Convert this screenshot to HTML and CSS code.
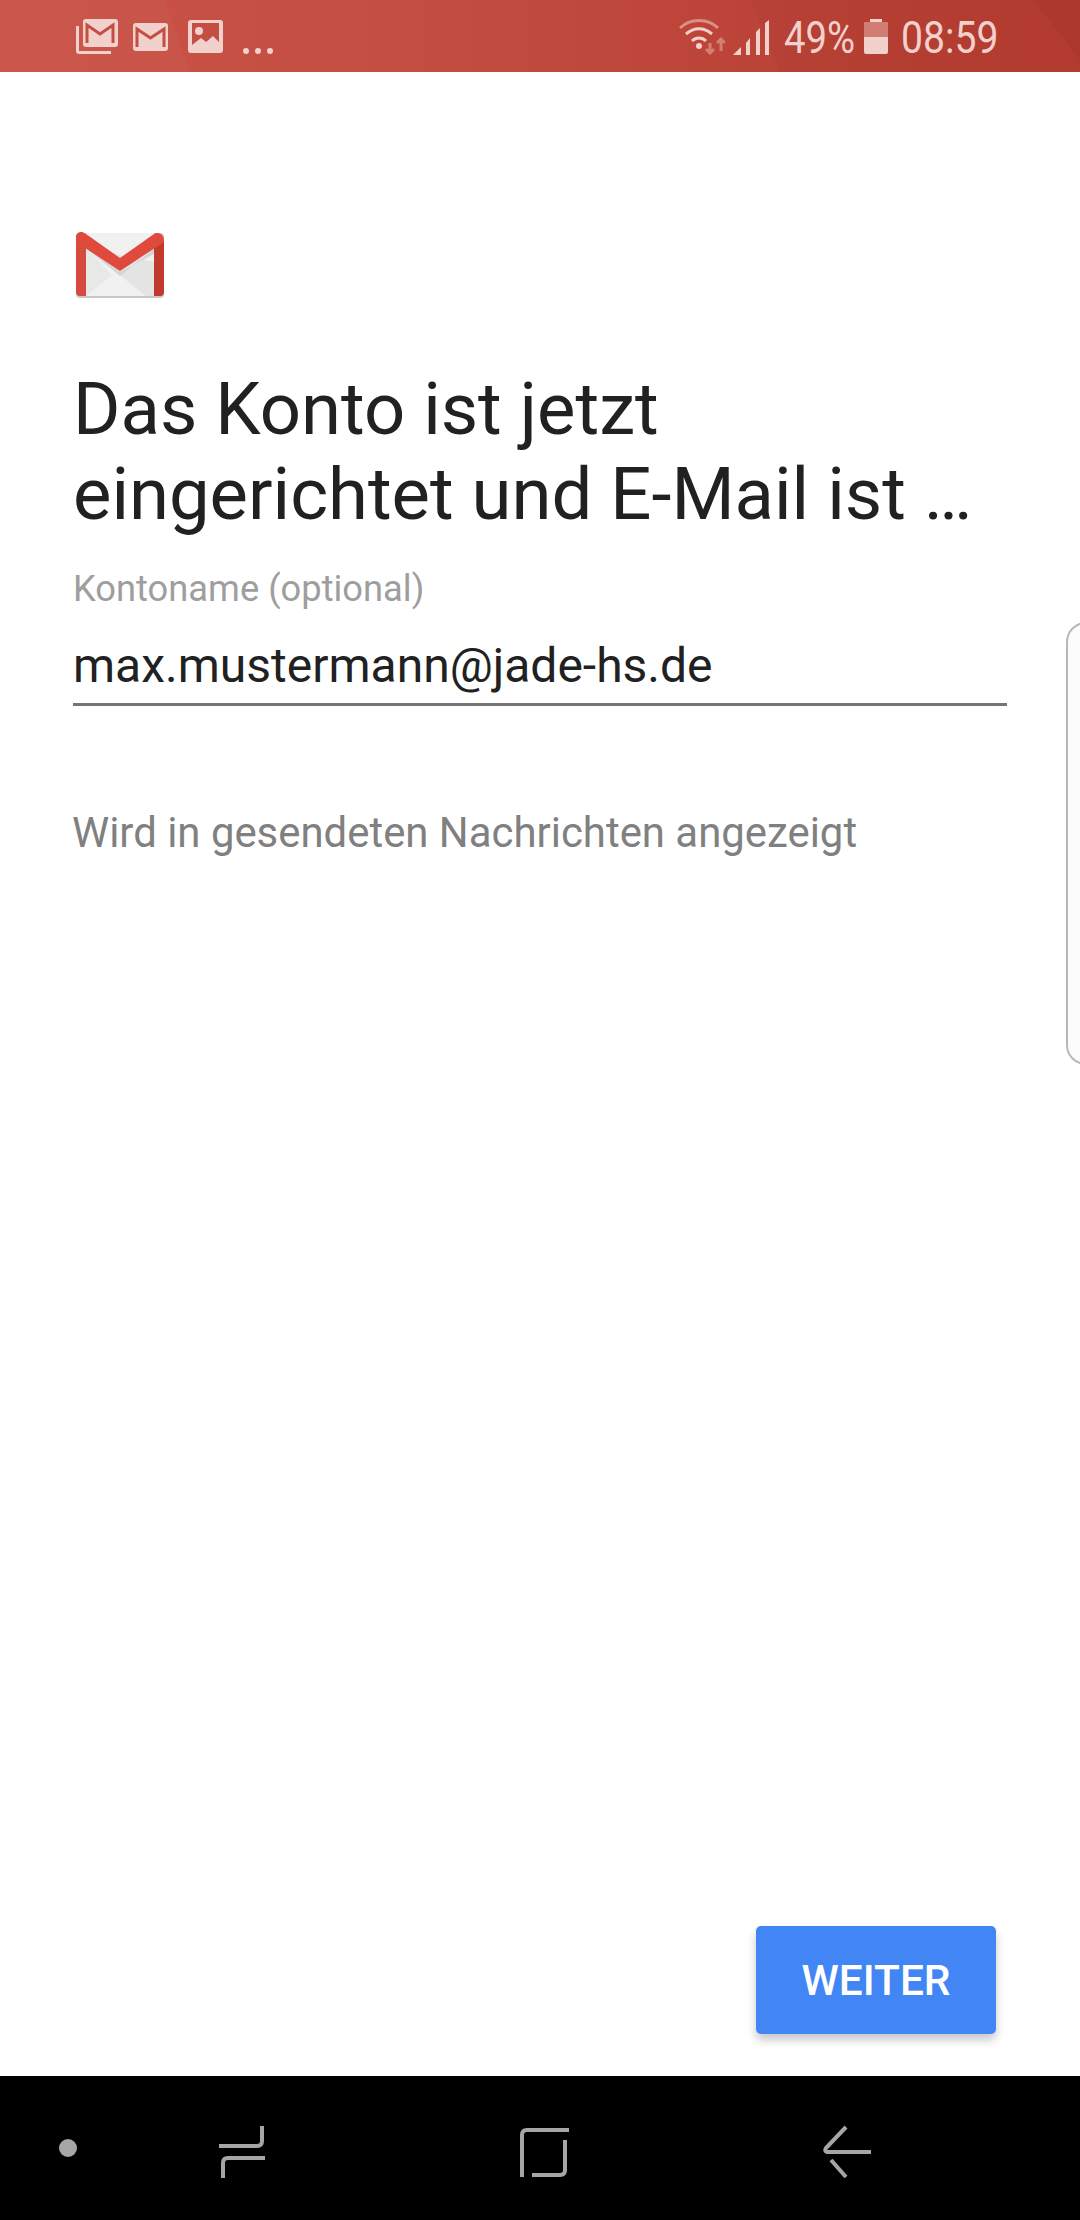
FILE: index.html
```html
<!DOCTYPE html>
<html>
<head>
  <title>Gmail</title>
  <link rel="stylesheet" href="styles.css">
</head>
<body>
  <div class="screen">
    <div class="status-bar">
      <svg class="status-bg" width="1080" height="72" viewBox="0 0 1080 72">
        <polygon points="0,0 164,0 190,72 0,72" fill="#fff" fill-opacity="0.03"/>
        <polygon points="750,0 1033,0 1080,60 1080,72 780,72" fill="#000" fill-opacity="0.02"/>
        <polygon points="1033,0 1080,0 1080,60" fill="#000" fill-opacity="0.05"/>
      </svg>
      <div class="status-left">
        <svg class="icon-stack" width="42" height="35" viewBox="0 0 42 35">
          <path d="M0 7h3v25h32v3H3a3 3 0 0 1-3-3z" fill="#f2d0cc"/>
          <rect x="7" y="0" width="35" height="28" rx="3" fill="#f2d0cc"/>
          <path d="M11 24V6l13 9 13-9v18" fill="none" stroke="#c54e43" stroke-width="3"/>
        </svg>
        <svg class="icon-mail" width="35" height="28" viewBox="0 0 35 28">
          <rect width="35" height="28" rx="3" fill="#f2d0cc"/>
          <path d="M4 24V6l13.500 9L31 6v18" fill="none" stroke="#c54e43" stroke-width="3"/>
        </svg>
        <svg class="icon-image" width="35" height="33" viewBox="0 0 35 33">
          <rect width="35" height="33" rx="3" fill="#f2d0cc"/>
          <path d="M4 3h27v19l-6-6-7 6-5-4-9 7z" fill="#c54e43"/>
          <circle cx="11" cy="11" r="4" fill="#f2d0cc"/>
        </svg>
        <div class="dots"><span></span><span></span><span></span></div>
      </div>
      <div class="status-right">
        <svg class="icon-wifi" width="46" height="36" viewBox="0 0 46 36">
          <path d="M1 9C11-1 29-1 39 9" fill="none" stroke="#dc8f86" stroke-width="3"/>
          <path d="M7 15c8-7 18-7 26 0M13 22c4-4 10-4 14 0" fill="none" stroke="#f2d0cc" stroke-width="3"/>
          <circle cx="20" cy="27" r="3" fill="#f2d0cc"/>
          <path d="M31 24v10m-4-4l4 4 4-4M42 32V20m-4 4l4-4 4 4" fill="none" stroke="#d47f75" stroke-width="3"/>
        </svg>
        <svg class="icon-signal" width="36" height="35" viewBox="0 0 36 35">
          <path d="M0 35l8-8v8zM13 35V23l4-5v17zM23 35V12l4-4v27zM32 35V3l4-3v35z" fill="#f2d0cc"/>
        </svg>
        <span class="status-text pct">49%</span>
        <div class="battery"><div class="battery-fill"></div></div>
        <span class="status-text clock">08:59</span>
      </div>
    </div>

    <div class="content">
      <svg class="gmail-logo" width="88" height="66" viewBox="0 0 88 66">
        <path d="M4 1h80a4 4 0 0 1 4 4v57a4 4 0 0 1-4 4H4a4 4 0 0 1-4-4V5a4 4 0 0 1 4-4z" fill="#c8c8c8"/>
        <path d="M10 1h68v63H10z" fill="#f1f1f1"/>
        <path d="M10 16l60 48h8V30z" fill="#e4e4e4"/>
        <path d="M10 16v48l26-21z" fill="#e8e8e8"/>
        <path d="M10 16l34 28 34-28v6L44 40z" fill="#d5d5d5"/>
        <path d="M0 64V6a5 5 0 0 1 10-2v60H4a4 4 0 0 1-4-4z" fill="#d54c3f"/>
        <path d="M78 16l10-7v51a4 4 0 0 1-4 4h-6z" fill="#c23a2c"/>
        <path d="M2 3c2-2 5-3 8-1l34 24L78 2c3-2 6-1 8 1 2 2 2 5 2 7L44 39 0 10c0-3 1-5 2-7z" fill="#e04a3c"/>
      </svg>
      <h1 class="title">Das Konto ist jetzt<br>eingerichtet und E-Mail ist …</h1>
      <div class="field">
        <div class="field-label">Kontoname (optional)</div>
        <div class="field-value">max.mustermann@jade-hs.de</div>
      </div>
      <div class="hint">Wird in gesendeten Nachrichten angezeigt</div>
      <div class="actions">
        <button class="next-button">WEITER</button>
      </div>
    </div>

    <div class="edge-panel"></div>

    <div class="nav-bar">
      <div class="nav-dot"></div>
      <svg class="nav-icon nav-recent" width="60" height="60" viewBox="0 0 60 60">
        <g fill="none" stroke="#a6a6a6" stroke-width="4">
          <path d="M0 20h38q5 0 5-5V0"/>
          <path d="M46 32H9q-5 0-5 5v15"/>
        </g>
      </svg>
      <svg class="nav-icon nav-home" width="60" height="60" viewBox="0 0 60 60">
        <g fill="none" stroke="#a6a6a6" stroke-width="4">
          <path d="M55 6H13q-5 0-5 5v42"/>
          <path d="M51 16v30q0 5-5 5H18"/>
        </g>
      </svg>
      <svg class="nav-icon nav-back" width="60" height="60" viewBox="0 0 60 60">
        <g fill="none" stroke="#a6a6a6" stroke-width="4">
          <path d="M33 3L13 24q-2 3 1 4h44"/>
          <path d="M18 36l15 17"/>
        </g>
      </svg>
    </div>
  </div>
</body>
</html>
```
FILE: styles.css
```css
* {
  box-sizing: border-box;
}

html, body {
  margin: 0;
  height: 100%;
}

body {
  font-family: Roboto, "Noto Sans", sans-serif;
  background-color: #fff;
}

.screen {
  position: relative;
  display: flex;
  flex-direction: column;
  width: 1080px;
  height: 2220px;
  overflow: hidden;
}

.status-bar {
  position: relative;
  display: flex;
  justify-content: space-between;
  align-items: flex-start;
  flex: none;
  height: 72px;
  padding: 19px 79px 0 76px;
  background-image: linear-gradient(90deg, #ca5247 0%, #c54e43 35%, #bb4338 70%, #b63c30 100%);
}

.status-bg {
  position: absolute;
  left: 0;
  top: 0;
}

.status-left,
.status-right {
  position: relative;
  display: flex;
}

.status-left svg {
  display: block;
  margin-right: 15px;
}

.icon-mail {
  margin-top: 4px;
}

.icon-image {
  margin: 1px 0 0 5px;
}

.dots {
  display: flex;
  gap: 6px;
  margin: 29px 0 0 5px;
}

.dots span {
  width: 6px;
  height: 6px;
  border-radius: 50%;
  background-color: #f2d0cc;
}

.icon-wifi {
  margin: 0 8px 0 0;
}

.icon-signal {
  margin: 1px 15px 0 0;
}

.status-text {
  display: block;
  font-size: 44px;
  line-height: 44px;
  color: #f2d0cc;
  transform: scaleX(0.87);
  transform-origin: left top;
  margin-top: -3px;
}

.pct {
  width: 80px;
}

.clock {
  width: 100px;
  margin-left: 13px;
  transform: scaleX(0.89);
}

.battery {
  position: relative;
  width: 24px;
  height: 32px;
  margin-top: 3px;
  border-radius: 2px;
  background-color: #f2d0cc;
}

.battery::before {
  content: "";
  position: absolute;
  left: 6px;
  top: -3px;
  width: 12px;
  height: 3px;
  background-color: #f2d0cc;
}

.battery-fill {
  height: 15px;
  margin: 0;
  border-radius: 2px 2px 0 0;
  background-color: #d27d74;
}

.content {
  display: flex;
  flex-direction: column;
  flex: 1;
  padding: 160px 73px 0 73px;
}

.gmail-logo {
  display: block;
  flex: none;
  margin-left: 3px;
}

.title {
  margin: 69px 0 0 0;
  font-size: 72.4px;
  line-height: 85px;
  font-weight: 400;
  color: #212121;
}

.field {
  margin-top: 30px;
  border-bottom: 3px solid #757575;
  padding-bottom: 5px;
}

.field-label {
  font-size: 36.3px;
  line-height: 44px;
  color: #9e9e9e;
}

.field-value {
  margin-top: 23px;
  font-size: 48px;
  line-height: 64px;
  color: #212121;
}

.hint {
  margin: 102px 0 0 -1px;
  font-size: 41.9px;
  line-height: 50px;
  color: #808080;
}

.actions {
  display: flex;
  justify-content: flex-end;
  margin: auto 11px 42px 0;
}

.next-button {
  width: 240px;
  height: 108px;
  border: none;
  border-radius: 5px;
  background-color: #4285f4;
  box-shadow: 0 6px 10px rgba(0, 0, 0, 0.22);
  color: #fff;
  font-family: inherit;
  font-size: 42.4px;
  font-weight: 500;
}

.edge-panel {
  position: absolute;
  left: 1066px;
  top: 622px;
  width: 40px;
  height: 443px;
  border: 2px solid #b8b8b8;
  border-radius: 24px;
  background-color: #fcfcfc;
}

.nav-bar {
  position: relative;
  flex: none;
  display: flex;
  height: 144px;
  background-color: #000;
}

.nav-dot {
  position: absolute;
  left: 59px;
  top: 63px;
  width: 18px;
  height: 18px;
  border-radius: 50%;
  background-color: #a6a6a6;
}

.nav-icon {
  position: absolute;
  top: 50px;
}

.nav-recent {
  left: 219px;
}

.nav-home {
  left: 514px;
  top: 48px;
}

.nav-back {
  left: 813px;
  top: 48px;
}
```
